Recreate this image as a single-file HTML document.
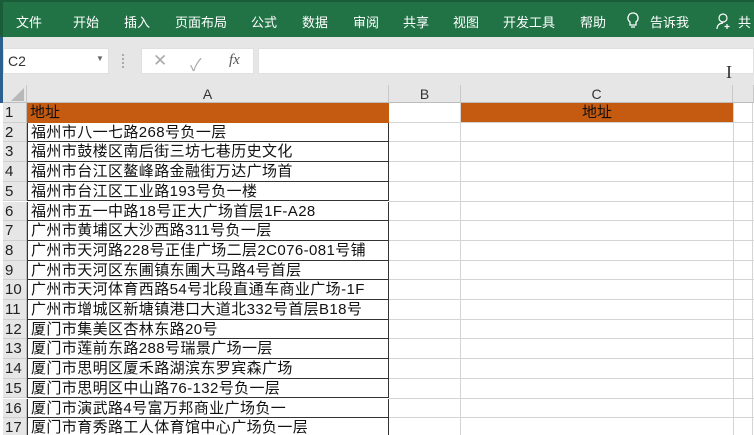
<!DOCTYPE html>
<html><head><meta charset="utf-8"><style>
*{margin:0;padding:0;box-sizing:border-box}
html,body{width:754px;height:435px;overflow:hidden}
body{background:#fff;font-family:"Liberation Sans","Noto Sans CJK SC",sans-serif;position:relative}
.rib{position:absolute;left:0;top:0;width:754px;height:37px;background:#217346;border-top:2px solid #1a5c38;border-left:3px solid #1a5c38}
.rib span{position:absolute;top:10px;color:#fff;font-size:13px}
.gray{position:absolute;left:0;top:37px;width:754px;height:66px;background:#e6e6e6;border-left:3px solid #2b5f8f}
.box{position:absolute;background:#fff;border:1px solid #d6d6d6}
.hdr{position:absolute;top:85px;height:18px;background:#e6e6e6;border-right:1px solid #c8c8c8;border-bottom:1px solid #bdbdbd;text-align:center;font-size:14px;color:#333;line-height:18px}
.rn{position:absolute;left:3px;width:24px;background:#e6e6e6;border-bottom:1px solid #cfcfcf;border-right:1px solid #bdbdbd;font-size:15px;color:#222;line-height:19px;padding-left:2px}
.ca{position:absolute;left:27px;width:362px;border:1px solid #333;border-top:none;font-size:15px;letter-spacing:0.4px;line-height:19px;padding-left:3px;color:#111;white-space:nowrap;overflow:hidden}
.vl{position:absolute;top:103px;width:1px;height:332px;background:#d4d4d4}
.hl{position:absolute;left:389px;width:365px;height:1px;background:#d4d4d4}
</style></head><body>
<div class="rib">
<span style="left:13px">文件</span><span style="left:70px">开始</span><span style="left:121px">插入</span><span style="left:172px">页面布局</span><span style="left:248px">公式</span><span style="left:299px">数据</span><span style="left:350px">审阅</span><span style="left:400px">共享</span><span style="left:450px">视图</span><span style="left:500px">开发工具</span><span style="left:577px">帮助</span>
<svg style="position:absolute;left:623px;top:10px" width="14" height="18" viewBox="0 0 14 18"><path d="M7 1a5 5 0 0 0-3 9v3h6v-3a5 5 0 0 0-3-9zM5 15h4" fill="none" stroke="#fff" stroke-width="1.3"/></svg>
<span style="left:647px">告诉我</span>
<svg style="position:absolute;left:713px;top:10px" width="16" height="18" viewBox="0 0 16 18"><circle cx="7" cy="6" r="4" fill="none" stroke="#fff" stroke-width="1.2"/><path d="M1 17c0-4 3-6 6-6M11 12v5M8.5 14.5h5" fill="none" stroke="#fff" stroke-width="1.2"/></svg>
<span style="left:735px">共</span>
</div>
<div class="gray"></div>
<div class="box" style="left:3px;top:48px;width:106px;height:26px;border-color:#e0e0e0"><span style="position:absolute;left:4px;top:4px;font-size:14px;color:#333">C2</span><span style="position:absolute;left:92px;top:5px;font-size:8px;color:#666">▼</span></div>
<div style="position:absolute;left:122px;top:54px;width:2px;height:14px;border-left:2px dotted #aaa"></div>
<div class="box" style="left:141px;top:48px;width:113px;height:26px;border-color:#e0e0e0">
<span style="position:absolute;left:11px;top:2px;font-size:17px;color:#aaa">✕</span><span style="position:absolute;left:48px;top:2px;font-size:17px;color:#aaa">✓</span><span style="position:absolute;left:87px;top:3px;font-size:15px;color:#555;font-style:italic;font-family:'Liberation Serif',serif">fx</span></div>
<div class="box" style="left:258px;top:48px;width:496px;height:26px;border-color:#e0e0e0"></div>
<div style="position:absolute;left:726px;top:62px;font-size:18px;color:#333;font-family:'Liberation Serif',serif">I</div>
<div class="hdr" style="left:3px;width:24px"><svg width="20" height="16" style="position:absolute;left:3px;top:1px"><path d="M18 2V15H5z" fill="#b8b8b8"/></svg></div>
<div class="hdr" style="left:27px;width:362px">A</div>
<div class="hdr" style="left:389px;width:72px">B</div>
<div class="hdr" style="left:461px;width:272px">C</div>
<div class="hdr" style="left:733px;width:21px"></div>
<div class="vl" style="left:460px"></div><div class="vl" style="left:733px"></div><div class="vl" style="left:752px"></div>
<div style="position:absolute;left:27px;top:103px;width:362px;height:19.7px;background:#c55a11;font-size:15px;line-height:19px;padding-left:3px;color:#111">地址</div>
<div style="position:absolute;left:461px;top:103px;width:272px;height:19.7px;background:#c55a11;font-size:15px;line-height:19px;text-align:center;color:#111">地址</div>
<div id="rows"></div>
<script>
var t=["福州市八一七路268号负一层","福州市鼓楼区南后街三坊七巷历史文化","福州市台江区鳌峰路金融街万达广场首","福州市台江区工业路193号负一楼","福州市五一中路18号正大广场首层1F-A28","广州市黄埔区大沙西路311号负一层","广州市天河路228号正佳广场二层2C076-081号铺","广州市天河区东圃镇东圃大马路4号首层","广州市天河体育西路54号北段直通车商业广场-1F","广州市增城区新塘镇港口大道北332号首层B18号","厦门市集美区杏林东路20号","厦门市莲前东路288号瑞景广场一层","厦门市思明区厦禾路湖滨东罗宾森广场","厦门市思明区中山路76-132号负一层","厦门市演武路4号富万邦商业广场负一","厦门市育秀路工人体育馆中心广场负一层"];
var h="";var R=19.7;
for(var i=0;i<17;i++){var y=103+i*R;h+='<div class="rn" style="top:'+y+'px;height:'+R+'px">'+(i+1)+'</div>';
if(i>0){h+='<div class="ca" style="top:'+y+'px;height:'+R+'px">'+(t[i-1]||"")+'</div>';}
h+='<div class="hl" style="top:'+(y+R-1)+'px"></div>';}
document.getElementById("rows").innerHTML=h;
</script>
</body></html>
